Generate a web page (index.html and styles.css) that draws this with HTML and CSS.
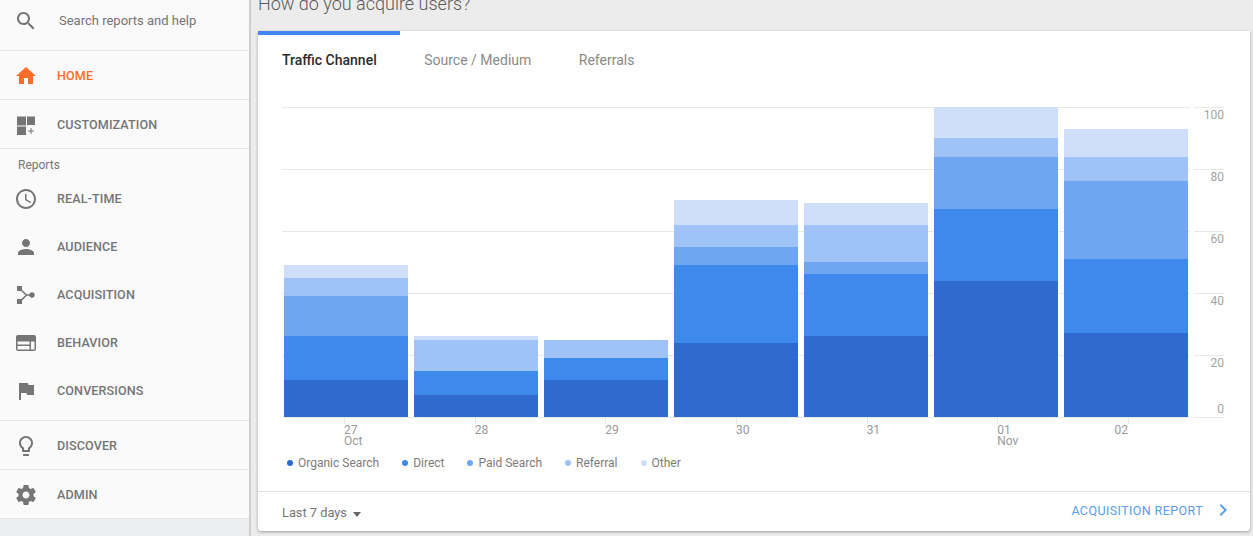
FILE: index.html
```html
<!DOCTYPE html>
<html lang="en">
<head>
<meta charset="utf-8">
<title>Acquisition</title>
<link rel="stylesheet" href="styles.css">
</head>
<body>
<div class="app">
  <aside class="sidebar">
    <div class="row search">
      <svg class="icon" viewBox="0 0 24 24"><path d="M15.5 14h-.79l-.28-.27C15.41 12.59 16 11.11 16 9.5 16 5.91 13.09 3 9.5 3S3 5.91 3 9.5 5.91 16 9.5 16c1.61 0 3.09-.59 4.23-1.57l.27.28v.79l5 4.99L20.49 19l-4.99-5zm-6 0C7.01 14 5 11.99 5 9.5S7.01 5 9.5 5 14 7.01 14 9.5 11.99 14 9.5 14z"/></svg>
      <span class="search-text">Search reports and help</span>
    </div>
    <div class="row top active">
      <svg class="icon" viewBox="0 0 24 24"><path d="M10 20v-6h4v6h5v-8h3L12 3 2 12h3v8z"/></svg>
      <span>HOME</span>
    </div>
    <div class="row top">
      <svg class="icon" viewBox="0 0 24 24"><path d="M3 3.500h9v9H3zM13 3.500h8v8.500h-8zM3 13.500h9v8.500H3zM16.500 15h1v2.500h2.500v1h-2.500V21h-1v-2.500H14v-1h2.500z"/></svg>
      <span>CUSTOMIZATION</span>
    </div>
    <div class="reports">
      <div class="reports-label">Reports</div>
      <div class="row item">
        <svg class="icon" viewBox="0 0 24 24"><path d="M11.99 2C6.47 2 2 6.48 2 12s4.47 10 9.99 10C17.52 22 22 17.52 22 12S17.52 2 11.99 2zM12 20c-4.42 0-8-3.58-8-8s3.58-8 8-8 8 3.58 8 8-3.58 8-8 8zm.5-13H11v6l5.25 3.15.75-1.23-4.5-2.67z"/></svg>
        <span>REAL-TIME</span>
      </div>
      <div class="row item">
        <svg class="icon" viewBox="0 0 24 24"><path d="M12 12c2.21 0 4-1.79 4-4s-1.79-4-4-4-4 1.79-4 4 1.79 4 4 4zm0 2c-2.67 0-8 1.34-8 4v2h16v-2c0-2.66-5.33-4-8-4z"/></svg>
        <span>AUDIENCE</span>
      </div>
      <div class="row item">
        <svg class="icon" viewBox="0 0 24 24"><path d="M3 3h5v5H3zM3 16h5v5H3z"/><circle cx="18" cy="12" r="2.7"/><path class="line" d="M6 6l6.5 6L6 18.500M12 12h5"/></svg>
        <span>ACQUISITION</span>
      </div>
      <div class="row item">
        <svg class="icon" viewBox="0 0 24 24"><path fill-rule="evenodd" d="M4 4h16a2 2 0 0 1 2 2v12a2 2 0 0 1-2 2H4a2 2 0 0 1-2-2V6a2 2 0 0 1 2-2zM3.500 10.500v3h12v-3zM3.500 15v3.500h12V15zM17 10.500v8h3.500v-8z"/></svg>
        <span>BEHAVIOR</span>
      </div>
      <div class="row item">
        <svg class="icon" viewBox="0 0 24 24"><path d="M14.400 6L14 4H5v17h2v-7h5.600l.4 2h7V6z"/></svg>
        <span>CONVERSIONS</span>
      </div>
    </div>
    <div class="row top">
      <svg class="icon" viewBox="0 0 24 24"><path d="M9 21c0 .55.45 1 1 1h4c.55 0 1-.45 1-1v-1H9v1zm3-19C8.140 2 5 5.140 5 9c0 2.380 1.190 4.470 3 5.740V17c0 .55.45 1 1 1h6c.55 0 1-.45 1-1v-2.260c1.810-1.270 3-3.360 3-5.740 0-3.860-3.140-7-7-7zm2.850 11.100l-.85.6V16h-4v-2.300l-.85-.6C7.800 12.160 7 10.630 7 9c0-2.760 2.240-5 5-5s5 2.240 5 5c0 1.630-.8 3.160-2.150 4.100z"/></svg>
      <span>DISCOVER</span>
    </div>
    <div class="row top">
      <svg class="icon" viewBox="0 0 24 24"><path d="M19.430 12.980c.04-.32.07-.64.07-.98s-.03-.66-.07-.98l2.110-1.650c.19-.15.24-.42.12-.64l-2-3.460c-.12-.22-.39-.3-.61-.22l-2.490 1c-.52-.4-1.080-.73-1.690-.98l-.38-2.650C14.460 2.180 14.250 2 14 2h-4c-.25 0-.46.18-.49.42l-.38 2.650c-.61.25-1.170.59-1.690.98l-2.490-1c-.23-.09-.49 0-.61.22l-2 3.460c-.13.22-.07.49.12.64l2.110 1.650c-.04.32-.07.65-.07.98s.03.66.07.98l-2.110 1.650c-.19.15-.24.42-.12.64l2 3.460c.12.22.39.3.61.22l2.490-1c.52.4 1.080.73 1.690.98l.38 2.650c.03.24.24.42.49.42h4c.25 0 .46-.18.49-.42l.38-2.650c.61-.25 1.170-.59 1.690-.98l2.490 1c.23.09.49 0 .61-.22l2-3.460c.12-.22.07-.49-.12-.64l-2.110-1.650zM12 15.500c-1.930 0-3.500-1.570-3.500-3.500s1.570-3.500 3.500-3.500 3.500 1.570 3.500 3.500-1.570 3.500-3.500 3.500z"/></svg>
      <span>ADMIN</span>
    </div>
    <div class="sidebar-rest"></div>
  </aside>

  <main class="main">
    <h2 class="question">How do you acquire users?</h2>
    <section class="card">
      <div class="tab-marker"></div>
      <nav class="tabs">
        <span class="tab current">Traffic Channel</span>
        <span class="tab">Source / Medium</span>
        <span class="tab">Referrals</span>
      </nav>
      <div class="chart">
        <div class="plot">
          <div class="gridlines"><i></i><i></i><i></i><i></i><i></i><i></i></div>
          <div class="bars">
            <div class="bar">
              <b class="other" style="height:13px"></b><b class="referral" style="height:18px"></b><b class="paid" style="height:40px"></b><b class="direct" style="height:44px"></b><b class="organic" style="height:37px"></b>
            </div>
            <div class="bar">
              <b class="other" style="height:4px"></b><b class="referral" style="height:31px"></b><b class="direct" style="height:24px"></b><b class="organic" style="height:22px"></b>
            </div>
            <div class="bar">
              <b class="referral" style="height:18px"></b><b class="direct" style="height:22px"></b><b class="organic" style="height:37px"></b>
            </div>
            <div class="bar">
              <b class="other" style="height:25px"></b><b class="referral" style="height:22px"></b><b class="paid" style="height:18px"></b><b class="direct" style="height:78px"></b><b class="organic" style="height:74px"></b>
            </div>
            <div class="bar">
              <b class="other" style="height:22px"></b><b class="referral" style="height:37px"></b><b class="paid" style="height:12px"></b><b class="direct" style="height:62px"></b><b class="organic" style="height:81px"></b>
            </div>
            <div class="bar">
              <b class="other" style="height:31px"></b><b class="referral" style="height:19px"></b><b class="paid" style="height:52px"></b><b class="direct" style="height:72px"></b><b class="organic" style="height:136px"></b>
            </div>
            <div class="bar">
              <b class="other" style="height:28px"></b><b class="referral" style="height:24px"></b><b class="paid" style="height:78px"></b><b class="direct" style="height:74px"></b><b class="organic" style="height:84px"></b>
            </div>
          </div>
        </div>
        <div class="y-axis">
          <div class="y-cell">100</div>
          <div class="y-cell">80</div>
          <div class="y-cell">60</div>
          <div class="y-cell">40</div>
          <div class="y-cell last"><span>20</span><span>0</span></div>
        </div>
      </div>
      <div class="x-axis">
        <div class="x-cell"><span>27</span><span>Oct</span></div>
        <div class="x-cell"><span>28</span></div>
        <div class="x-cell"><span>29</span></div>
        <div class="x-cell"><span>30</span></div>
        <div class="x-cell"><span>31</span></div>
        <div class="x-cell"><span>01</span><span>Nov</span></div>
        <div class="x-cell end"><span>02</span></div>
      </div>
      <div class="legend">
        <span class="key"><i class="organic"></i>Organic Search</span>
        <span class="key"><i class="direct"></i>Direct</span>
        <span class="key"><i class="paid"></i>Paid Search</span>
        <span class="key"><i class="referral"></i>Referral</span>
        <span class="key"><i class="other"></i>Other</span>
      </div>
      <footer class="card-foot">
        <span class="range">Last 7 days<i class="caret"></i></span>
        <span class="report">ACQUISITION REPORT
          <svg class="chevron" viewBox="0 0 24 24"><path d="M9 6L7.600 7.400 12.200 12l-4.600 4.600L9 18l6-6z"/></svg>
        </span>
      </footer>
    </section>
  </main>
</div>
</body>
</html>
```

FILE: styles.css
```css
* { box-sizing: border-box; }
html, body { margin: 0; height: 536px; overflow: hidden; }
body { font-family: Roboto, "Liberation Sans", sans-serif; background: #ececec; color: #757575; }

.app { display: flex; height: 536px; }

/* Sidebar */
.sidebar {
  width: 251px;
  flex: none;
  display: flex;
  flex-direction: column;
  background: #fafafa;
  border-right: 2px solid #cfcfcf;
}
.row {
  display: flex;
  align-items: center;
  padding-left: 14px;
  font-size: 12.600px;
  font-weight: 500;
  letter-spacing: .1px;
  color: #757575;
}
.row > span { margin-left: 19px; }
.icon { width: 24px; height: 24px; flex: none; fill: #757575; }
.icon .line { fill: none; stroke: #757575; stroke-width: 1.6; }
.search { height: 51px; border-bottom: 1px solid #e6e6e6; padding-bottom: 9px; }
.row > .search-text { margin-left: 21px; font-size: 13px; font-weight: 400; letter-spacing: 0; }
.top { height: 49px; border-bottom: 1px solid #e6e6e6; padding-top: 1px; }
.active, .active > span { color: #ff6d2c; }
.active .icon { fill: #ff6d2c; }
.reports { height: 272px; border-bottom: 1px solid #e6e6e6; }
.reports-label { height: 26px; padding: 9px 0 0 18px; font-size: 12px; line-height: 14px; color: #757575; }
.item { height: 48px; }
.item > span { margin-top: -2px; }
.sidebar-rest { flex: 1; background: #eceff1; }

/* Main */
.main { flex: 1; min-width: 0; padding: 0 3px 0 7px; }
.question {
  height: 31px;
  margin: -8px 0 8px;
  font-size: 18px;
  line-height: 24px;
  font-weight: 300;
  color: #5a5a5a;
}
.card {
  height: 500px;
  background: #fff;
  border-radius: 0 0 3px 3px;
  box-shadow: 0 1px 3px rgba(0, 0, 0, .35);
  display: flex;
  flex-direction: column;
}
.tab-marker { width: 142px; height: 4px; background: #4285f4; flex: none; }
.tabs { height: 72px; flex: none; display: flex; gap: 47.500px; padding: 17px 0 0 24px; font-size: 14px; line-height: 17px; color: #8a8a8a; }
.tab.current { color: #2b2b2b; font-weight: 500; }

/* Chart */
.chart { display: flex; flex: none; height: 311px; padding-left: 24px; gap: 4px; }
.plot { position: relative; width: 908px; height: 311px; }
.gridlines { position: absolute; inset: 0; display: flex; flex-direction: column; justify-content: space-between; }
.gridlines i { display: block; height: 1px; background: #e8e8e8; }
.bars { position: absolute; inset: 0 0 1px 2px; display: flex; gap: 6px; align-items: flex-end; }
.bar { width: 124px; display: flex; flex-direction: column; }
.bar b { display: block; }
.organic { background: #2f6bcf; }
.direct { background: #3d89ec; }
.paid { background: #6ea6f1; }
.referral { background: #9fc3f6; }
.other { background: #cfdff9; }

.y-axis { width: 30px; height: 311px; font-size: 12px; line-height: 14px; color: #a3a3a3; text-align: right; }
.y-cell { height: 62px; border-top: 1px solid #e8e8e8; }
.y-cell.last { height: 63px; border-bottom: 1px solid #e8e8e8; display: flex; flex-direction: column; justify-content: space-between; padding-bottom: 1px; }

.x-axis { display: flex; flex: none; height: 31px; padding-left: 86px; font-size: 12px; line-height: 11px; color: #999; }
.x-cell { width: 130.670px; flex: none; padding-top: 7px; position: relative; }
.x-cell span { display: block; }
.x-cell::before { content: ""; position: absolute; left: 0; top: 0; width: 1px; height: 6px; background: #e8e8e8; }
.x-cell.end span { width: 0; direction: rtl; white-space: nowrap; }

.legend { display: flex; flex: none; height: 42px; padding: 7px 0 0 29px; font-size: 12px; line-height: 14px; color: #7c7c7c; }
.key { display: flex; align-items: center; height: 14px; margin-right: 23px; }
.key i { display: block; width: 6px; height: 6px; border-radius: 50%; margin-right: 5px; }

.card-foot {
  flex: 1;
  border-top: 1px solid #e2e2e2;
  display: flex;
  align-items: center;
  justify-content: space-between;
  padding: 0 24px;
}
.range { display: flex; align-items: center; font-size: 12.800px; line-height: 14px; color: #757575; padding-top: 3px; }
.caret { margin: 2px 0 0 6px; width: 0; height: 0; border-left: 4.500px solid transparent; border-right: 4.500px solid transparent; border-top: 5px solid #666; }
.report { display: flex; align-items: center; font-size: 12.500px; letter-spacing: .4px; color: #5b9de6; padding-bottom: 3px; }
.chevron { width: 24px; height: 24px; fill: #5b9de6; margin: 0 -10px 0 9px; }
```
